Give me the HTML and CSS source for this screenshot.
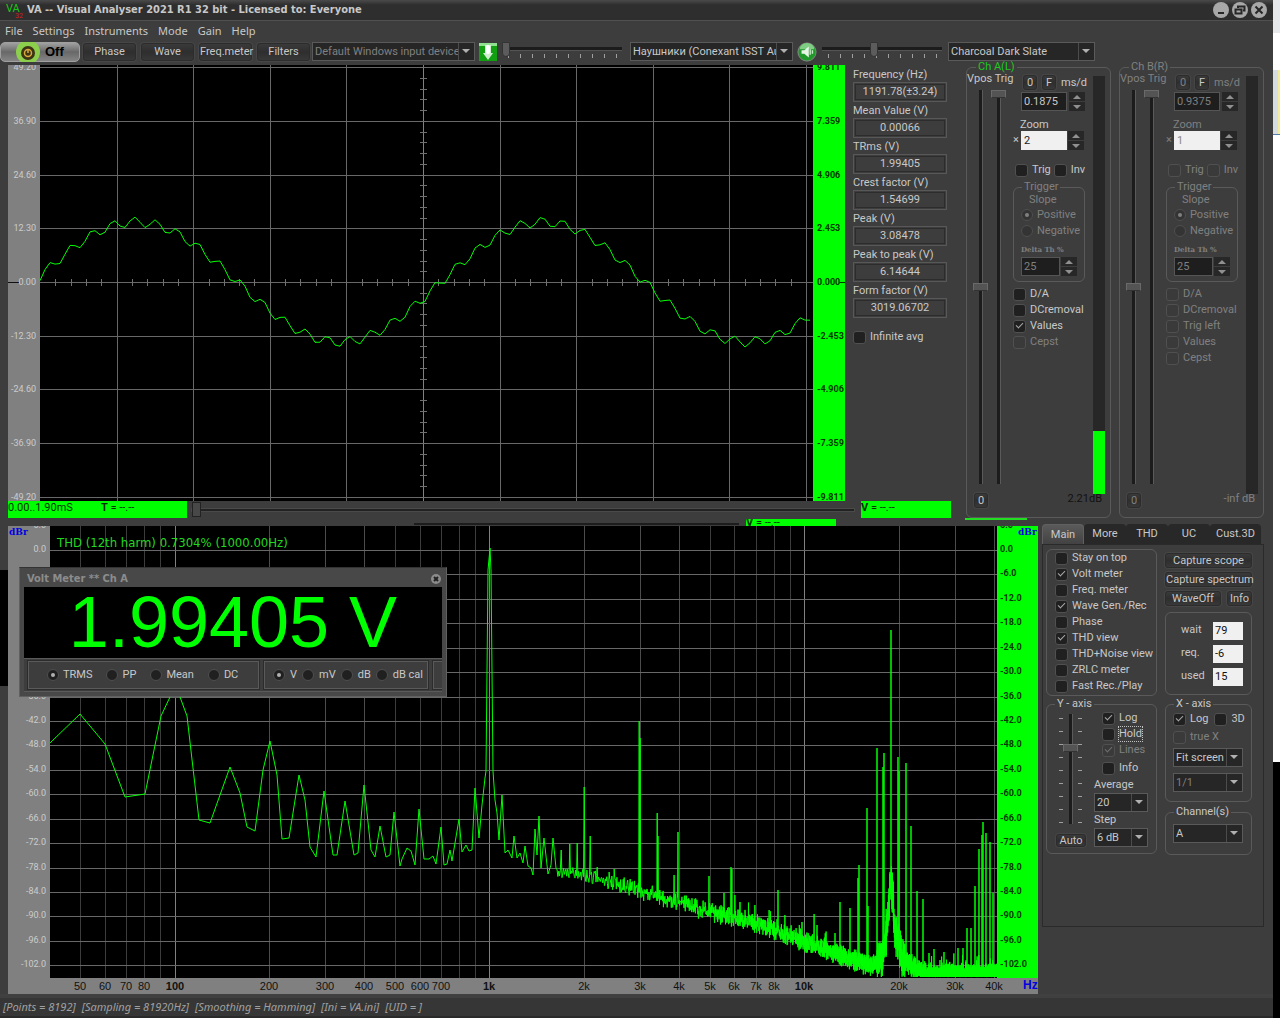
FILE: index.html
```html
<!DOCTYPE html>
<html lang="en">
<head>
<meta charset="utf-8">
<meta name="viewport" content="width=device-width, initial-scale=1">
<title>VA -- Visual Analyser 2021 R1 32 bit</title>
<link rel="stylesheet" href="styles.css">
</head>
<body>
<div class="app">
  <header class="titlebar">
    <svg class="logo" viewBox="0 0 18 18" width="18" height="18" aria-hidden="true">
      <text class="logo-main" x="1" y="11">VA</text><text class="logo-sub" x="10" y="17">32</text>
    </svg>
    <h1 class="title">VA -- Visual Analyser 2021 R1 32 bit - Licensed to: Everyone</h1>
    <div class="winbtns">
      <button class="winbtn" aria-label="Minimize"><svg viewBox="0 0 16 16"><path d="M5 11h6"/></svg></button>
      <button class="winbtn" aria-label="Restore"><svg viewBox="0 0 16 16"><path d="M6 6V4.5h6.500v4H11M3.500 7.500h6v4h-6z"/></svg></button>
      <button class="winbtn" aria-label="Close"><svg viewBox="0 0 16 16"><path d="M4.500 4.500l7 7M11.500 4.500l-7 7"/></svg></button>
    </div>
  </header>

  <nav class="menu">
    <a href="#file">File</a><a href="#settings">Settings</a><a href="#instruments">Instruments</a><a href="#mode">Mode</a><a href="#gain">Gain</a><a href="#help">Help</a>
  </nav>

  <div class="toolbar">
    <button class="power">
      <svg viewBox="0 0 24 20" width="24" height="20" aria-hidden="true"><circle cx="12" cy="10" r="12" fill="#8ccf4d"/><circle cx="12" cy="11" r="7" fill="#3c3414"/><circle cx="12" cy="11" r="3.500" fill="none" stroke="#d8a83c" stroke-width="1.500"/><path d="M12 7v4" stroke="#d8a83c" stroke-width="1.500"/></svg>
      <span>Off</span>
    </button>
    <button class="btn tool">Phase</button>
    <button class="btn tool">Wave</button>
    <button class="btn tool">Freq.meter</button>
    <button class="btn tool">Filters</button>
    <span class="combo in-device dim"><select aria-label="Input device"><option>Default Windows input device</option></select></span>
    <svg class="mic" viewBox="0 0 18 18" width="18" height="18" role="img" aria-label="Microphone"><rect width="18" height="18" fill="#12a012"/><path d="M0 0h18v3H0z" fill="#8fe08f"/><path d="M6 2h6v8h2l-5 7-5-7h2z" fill="#cfeecf"/><rect x="7" y="2" width="4" height="9" rx="2" fill="#fff"/></svg>
    <span class="hslider"><input type="range" min="0" max="100" value="0" aria-label="Input level"></span>
    <span class="combo out-device"><select aria-label="Output device"><option>Наушники (Conexant ISST Audio)</option></select></span>
    <svg class="speaker" viewBox="0 0 22 22" width="22" height="20" role="img" aria-label="Speaker"><circle cx="11" cy="11" r="10" fill="#1f9a2a" stroke="#8a8a8a"/><path d="M3 8a8 7 0 0 1 16 0z" fill="#7fce84"/><path d="M5 9h3l5-4v12l-5-4H5z" fill="#e6f5e6"/><path d="M14.500 8v6M17 9v4" stroke="#c8ecc8" stroke-width="1.500"/></svg>
    <span class="hslider"><input type="range" min="0" max="100" value="43" aria-label="Output level"></span>
    <span class="combo theme"><select aria-label="Theme"><option>Charcoal Dark Slate</option></select></span>
  </div>

  <main>
    <div class="upper">
      <div class="scope-area">
        <div class="scope-row">
          <svg id="scope" class="scope" role="img" aria-label="Oscilloscope"></svg>
          <div class="values">
            <label for="v1">Frequency (Hz)</label><output id="v1">1191.78(±3.24)</output>
            <label for="v2">Mean Value (V)</label><output id="v2">0.00066</output>
            <label for="v3">TRms (V)</label><output id="v3">1.99405</output>
            <label for="v4">Crest factor (V)</label><output id="v4">1.54699</output>
            <label for="v5">Peak (V)</label><output id="v5">3.08478</output>
            <label for="v6">Peak to peak (V)</label><output id="v6">6.14644</output>
            <label for="v7">Form factor (V)</label><output id="v7">3019.06702</output>
            <label class="check avg"><input type="checkbox">Infinite avg</label>
          </div>
        </div>
        <div class="readouts">
          <div class="green time"><span>0.00..1.90mS</span><span><b>T</b> = --.--</span></div>
          <span class="scroll"><input type="range" min="0" max="100" value="0" aria-label="Time position"></span>
          <div class="green volt"><b>V</b> = --.--</div>
        </div>
      </div>

      <fieldset class="channel">
        <legend>Ch A(L)</legend>
        <div class="sliders">
          <div class="heads">Vpos Trig</div>
          <div class="pair">
            <input class="vslider" type="range" min="0" max="100" value="50" aria-label="A Vpos">
            <input class="vslider" type="range" min="0" max="100" value="100" aria-label="A Trig">
          </div>
          <button class="btn zero">0</button>
        </div>
        <div class="controls">
          <div class="timebase"><button class="btn">0</button><button class="btn">F</button><span>ms/d</span></div>
          <div class="spin"><input type="text" value="0.1875" aria-label="A ms/d"><span class="arrows"><button aria-label="Up"></button><button aria-label="Down"></button></span></div>
          <label class="zoomlabel" for="zoomA">Zoom</label>
          <div class="spin light"><span class="times">×</span><input id="zoomA" type="text" value="2"><span class="arrows"><button aria-label="Up"></button><button aria-label="Down"></button></span></div>
          <div class="duo"><label class="check"><input type="checkbox">Trig</label><label class="check"><input type="checkbox">Inv</label></div>
          <fieldset class="trigger dim">
            <legend>Trigger</legend>
            <span class="slope">Slope</span>
            <label class="radio"><input type="radio" name="slopeA" checked>Positive</label>
            <label class="radio"><input type="radio" name="slopeA">Negative</label>
            <label class="delta" for="thA">Delta Th %</label>
            <div class="spin small"><input id="thA" type="text" value="25"><span class="arrows"><button aria-label="Up"></button><button aria-label="Down"></button></span></div>
          </fieldset>
          <div class="checks">
            <label class="check"><input type="checkbox">D/A</label>
            <label class="check"><input type="checkbox">DCremoval</label>
            <label class="check"><input type="checkbox" checked>Values</label>
            <label class="check dim"><input type="checkbox">Cepst</label>
          </div>
          <span class="level">2.21dB</span>
        </div>
        <div class="meter"><div class="fill" style="height:15%"></div></div>
      </fieldset>

      <fieldset class="channel off dim">
        <legend>Ch B(R)</legend>
        <div class="sliders">
          <div class="heads">Vpos Trig</div>
          <div class="pair">
            <input class="vslider" type="range" min="0" max="100" value="50" aria-label="B Vpos">
            <input class="vslider" type="range" min="0" max="100" value="100" aria-label="B Trig">
          </div>
          <button class="btn zero">0</button>
        </div>
        <div class="controls">
          <div class="timebase"><button class="btn">0</button><button class="btn lit">F</button><span>ms/d</span></div>
          <div class="spin"><input type="text" value="0.9375" aria-label="B ms/d"><span class="arrows"><button aria-label="Up"></button><button aria-label="Down"></button></span></div>
          <label class="zoomlabel" for="zoomB">Zoom</label>
          <div class="spin light"><span class="times">×</span><input id="zoomB" type="text" value="1"><span class="arrows"><button aria-label="Up"></button><button aria-label="Down"></button></span></div>
          <div class="duo"><label class="check"><input type="checkbox">Trig</label><label class="check"><input type="checkbox">Inv</label></div>
          <fieldset class="trigger">
            <legend>Trigger</legend>
            <span class="slope">Slope</span>
            <label class="radio"><input type="radio" name="slopeB" checked>Positive</label>
            <label class="radio"><input type="radio" name="slopeB">Negative</label>
            <label class="delta" for="thB">Delta Th %</label>
            <div class="spin small"><input id="thB" type="text" value="25"><span class="arrows"><button aria-label="Up"></button><button aria-label="Down"></button></span></div>
          </fieldset>
          <div class="checks">
            <label class="check"><input type="checkbox">D/A</label>
            <label class="check"><input type="checkbox">DCremoval</label>
            <label class="check"><input type="checkbox">Trig left</label>
            <label class="check"><input type="checkbox">Values</label>
            <label class="check"><input type="checkbox">Cepst</label>
          </div>
          <span class="level">-inf dB</span>
        </div>
        <div class="meter"></div>
      </fieldset>
    </div>

    <div class="seam"><span class="seam-track"></span><span class="seam-volt"><b>V</b> = --.--</span><span class="seam-line"></span></div>

    <div class="lower">
      <div class="spectrum-wrap">
        <svg id="spectrum" class="spectrum" role="img" aria-label="Spectrum"></svg>
        <section class="voltmeter">
          <header class="vm-title"><span>Volt Meter ** Ch A</span><button class="vm-close" aria-label="Close"><svg viewBox="0 0 10 10"><path d="M3 3l4 4M7 3l-4 4"/></svg></button></header>
          <div class="vm-display">1.99405 V</div>
          <div class="vm-modes">
            <div class="vm-group first">
              <label class="radio"><input type="radio" name="mode" checked>TRMS</label>
              <label class="radio"><input type="radio" name="mode">PP</label>
              <label class="radio"><input type="radio" name="mode">Mean</label>
              <label class="radio"><input type="radio" name="mode">DC</label>
            </div>
            <div class="vm-group units">
              <label class="radio"><input type="radio" name="unit" checked>V</label>
              <label class="radio"><input type="radio" name="unit">mV</label>
              <label class="radio"><input type="radio" name="unit">dB</label>
              <label class="radio"><input type="radio" name="unit">dB cal</label>
            </div>
            <div class="vm-group cut"></div>
          </div>
        </section>
      </div>

      <section class="side">
        <div class="tabs" role="tablist">
          <button class="tab active" role="tab">Main</button><button class="tab" role="tab">More</button><button class="tab" role="tab">THD</button><button class="tab" role="tab">UC</button><button class="tab" role="tab">Cust.3D</button>
        </div>
        <div class="panel">
          <div class="col">
            <div class="box views">
              <label class="check"><input type="checkbox">Stay on top</label>
              <label class="check"><input type="checkbox" checked>Volt meter</label>
              <label class="check"><input type="checkbox">Freq. meter</label>
              <label class="check"><input type="checkbox" checked>Wave Gen./Rec</label>
              <label class="check"><input type="checkbox">Phase</label>
              <label class="check"><input type="checkbox" checked>THD view</label>
              <label class="check"><input type="checkbox">THD+Noise view</label>
              <label class="check"><input type="checkbox">ZRLC meter</label>
              <label class="check"><input type="checkbox">Fast Rec./Play</label>
            </div>
            <fieldset class="box yaxis">
              <legend>Y - axis</legend>
              <div class="yleft">
                <span class="ticks"><input class="vslider" type="range" min="0" max="100" value="71" aria-label="Y position"></span>
                <button class="btn auto">Auto</button>
              </div>
              <div class="yright">
                <label class="check"><input type="checkbox" checked>Log</label>
                <label class="check focus"><input type="checkbox"><span>Hold</span></label>
                <label class="check dim"><input type="checkbox" checked>Lines</label>
                <label class="check"><input type="checkbox">Info</label>
                <label class="cap" for="average">Average</label>
                <span class="combo"><select id="average"><option>20</option></select></span>
                <label class="cap" for="step">Step</label>
                <span class="combo"><select id="step"><option>6 dB</option></select></span>
              </div>
            </fieldset>
          </div>
          <div class="col right">
            <div class="actions">
              <button class="btn wide">Capture scope</button>
              <button class="btn wide">Capture spectrum</button>
              <button class="btn wave">WaveOff</button><button class="btn">Info</button>
            </div>
            <div class="box waits">
              <label for="wait">wait</label><input id="wait" type="text" value="79">
              <label for="req">req.</label><input id="req" type="text" value="-6">
              <label for="used">used</label><input id="used" type="text" value="15">
            </div>
            <fieldset class="box xaxis">
              <legend>X - axis</legend>
              <div class="duo"><label class="check"><input type="checkbox" checked>Log</label><label class="check"><input type="checkbox">3D</label></div>
              <label class="check dim"><input type="checkbox">true X</label>
              <span class="combo"><select aria-label="X fit"><option>Fit screen</option></select></span>
              <span class="combo dim"><select aria-label="X ratio"><option>1/1</option></select></span>
            </fieldset>
            <fieldset class="box channels">
              <legend>Channel(s)</legend>
              <span class="combo"><select aria-label="Channels"><option>A</option></select></span>
            </fieldset>
          </div>
        </div>
      </section>
    </div>
  </main>
  <footer class="status"><span>[Points = 8192]</span><span>[Sampling = 81920Hz]</span><span>[Smoothing = Hamming]</span><span>[Ini = VA.ini]</span><span>[UID = ]</span></footer>
</div>
<aside class="desktop" aria-hidden="true"></aside>
<script src="plots.js"></script>
</body>
</html>
```
FILE: styles.css
```css
* { box-sizing: border-box; }
body {
  margin: 0;
  min-height: 100vh;
  display: flex;
  background: #3d3d3d;
  color: #c8c8c8;
  font: 11px/16px Roboto, "Liberation Sans", sans-serif;
}
button, input, select { font: inherit; color: inherit; margin: 0; padding: 0; }
fieldset { margin: 0; padding: 0; border: 1px solid #5a5a5a; border-radius: 6px; min-width: 0; }
legend { padding: 0 2px; margin-left: 8px; line-height: 12px; }
.app { flex: 1; min-width: 0; display: flex; flex-direction: column; }
.dim { color: #808080; }

.desktop {
  width: 7px;
  background:
    linear-gradient(#f2ec9c, #f2ec9c) 5px 70px / 2px 64px no-repeat,
    linear-gradient(#e6e8ea 0 33px, #fff 33px 70px, #d6dde2 70px 134px, #5580a8 134px 135px, #fff 135px 762px, #000 762px);
}

/* window frame */
.titlebar { height: 21px; display: flex; align-items: center; padding: 0 6px 0 5px; background: linear-gradient(#4a4a4a, #2e2e2e 5px); border-bottom: 1px solid #505050; }
.logo-main { fill: #18c818; }
.logo-sub { fill: #d02020; }
.title { margin: 0 auto 0 4px; font: bold 11px/16px "DejaVu Sans Condensed", "Noto Sans", sans-serif; }
.winbtns { display: flex; gap: 3px; }
.winbtn { width: 16px; height: 16px; border: 0; border-radius: 8px; background: #a8a8a8; display: flex; }
.winbtn svg { width: 16px; height: 16px; fill: none; stroke: #262626; stroke-width: 2; }

.menu { height: 20px; display: flex; gap: 10px; padding: 0 5px; }
.menu a { color: #c8c8c8; text-decoration: none; font: 11px/20px "Noto Sans", sans-serif; }

.toolbar { display: flex; align-items: center; height: 21px; white-space: nowrap; }
.btn { border: 1px solid #2c2c2c; border-radius: 3px; background: linear-gradient(#3a3a3a, #2e2e2e 50%, #383838); box-shadow: 0 0 0 1px #464646; line-height: 13px; white-space: nowrap; cursor: pointer; }
.tool { width: 53px; height: 18px; margin-left: 3px; flex: none; line-height: 16px; }
.tool + .tool { margin-left: 5px; }
.power { width: 80px; height: 20px; flex: none; display: flex; align-items: center; gap: 5px; padding-left: 15px; border: 1px solid #a0a0a0; border-radius: 5px; background: linear-gradient(#a0a0a0, #686868 50%, #858585); color: #000; font: bold 13px/18px "Liberation Sans", sans-serif; }
.combo { position: relative; display: flex; height: 19px; border: 1px solid #5a5a5a; background: #262626; }
.combo select { appearance: none; flex: 1; min-width: 0; width: 100%; border: 0; background: none; padding: 0 15px 0 2px; line-height: 16px; overflow: hidden; }
.combo::before { content: ""; position: absolute; right: 0; top: 0; bottom: 0; width: 15px; border-left: 1px solid #4c4c4c; pointer-events: none; }
.combo::after { content: ""; position: absolute; right: 4px; top: 6px; border: 4px solid transparent; border-top-color: #b0b0b0; border-bottom: 0; pointer-events: none; }
.in-device { width: 163px; margin: 0 4px 0 2px; }
.out-device { width: 163px; margin: 0 3px 0 8px; }
.theme { width: 147px; margin-left: 6px; }
.hslider { width: 120px; height: 20px; margin-left: 5px; display: flex; background: repeating-linear-gradient(90deg, #a0a0a0 0 1px, transparent 1px 12px) 6px 12px / 110px 4px no-repeat; }
.speaker + .hslider { margin-left: 4px; }
.mic, .speaker { flex: none; }

.hslider input, .scroll input { appearance: none; width: 100%; height: 14px; background: none; }
.hslider input::-webkit-slider-runnable-track { height: 4px; background: #1c1c1c; border-bottom: 1px solid #555; }
.hslider input::-webkit-slider-thumb { appearance: none; width: 8px; height: 15px; margin-top: -5px; background: #5c5c5c; border: 1px solid #333; border-radius: 1px 1px 4px 4px; }

/* oscilloscope */
main { padding: 3px 9px 0 8px; }
.upper { display: flex; align-items: stretch; gap: 8px; }
.scope-area { flex: 1; min-width: 0; margin-right: 6px; }
.scope-row { display: flex; gap: 8px; height: 436px; }
.scope { flex: 1; min-width: 0; height: 436px; display: block; background: #000; }
.values { width: 94px; margin-right: 5px; display: flex; flex-direction: column; }
.values > label { line-height: 15px; margin-top: 1px; }
.values > label:first-child { margin-top: 2px; }
.values output { height: 20px; line-height: 17px; text-align: center; border: 1px solid #585858; outline: 1px solid #2c2c2c; outline-offset: -3px; }
.values .avg { margin-top: 11px; line-height: 16px; }
.readouts { display: flex; height: 17px; }
.green { background: #0f0; color: #003000; line-height: 14px; }
.time { width: 179px; display: flex; gap: 28px; }
.volt { width: 90px; margin: 0 1px 0 6px; }
.scroll { flex: 1; display: flex; padding: 2px 0 0 4px; }
.scroll input::-webkit-slider-runnable-track { height: 4px; background: #222; border: 1px solid #4a4a4a; }
.scroll input::-webkit-slider-thumb { appearance: none; width: 9px; height: 15px; margin-top: -7px; background: #484848; border: 1px solid #222; }

/* checkboxes and radios */
.check, .radio { display: flex; align-items: center; gap: 4px; line-height: 16px; white-space: nowrap; }
.check input { appearance: none; width: 13px; height: 13px; flex: none; border: 1px solid #505050; border-radius: 3px; background: #202020; display: grid; place-content: center; }
.check input:checked::after { content: ""; width: 6px; height: 3px; border: solid #a8a8a8; border-width: 0 0 1px 1px; transform: rotate(-45deg) translate(1px, -1px); }
.dim.check input, .dim .check input { background: #3a3a3a; }
.dim.check input:checked::after { border-color: #707070; }
.radio input { appearance: none; width: 12px; height: 12px; flex: none; border: 1px solid #4e4e4e; border-radius: 6px; background: #202020; display: grid; place-content: center; }
.radio input:checked::after { content: ""; width: 4px; height: 4px; border-radius: 2px; background: #b0b0b0; }
.dim .radio input { background: #343434; }
.dim .radio input:checked::after { background: #808080; }

/* channel strips */
.channel { position: relative; width: 145px; margin-top: -4px; }
.channel > legend { color: #20c820; margin-left: 9px; }
.channel.off > legend { color: #808080; }
.sliders { float: left; width: 45px; }
.heads { height: 17px; line-height: 12px; white-space: nowrap; }
.pair { display: flex; gap: 3px; padding-left: 6px; }
.vslider { appearance: none; writing-mode: vertical-lr; direction: rtl; width: 15px; height: 394px; background: none; }
.vslider::-webkit-slider-runnable-track { width: 4px; background: #1c1c1c; border-right: 1px solid #5a5a5a; }
.vslider::-webkit-slider-thumb { appearance: none; width: 15px; height: 8px; margin-left: -6px; background: #545454; border: 1px solid #6a6a6a; border-bottom-color: #333; }
.zero { display: block; width: 14px; height: 15px; margin: 9px 0 9px 7px; }
.controls { float: left; width: 81px; padding: 2px 0 0 1px; }
.timebase { display: flex; gap: 5px; padding-left: 10px; line-height: 15px; }
.timebase .btn { width: 14px; height: 15px; }
.lit { color: #c8c8c8; }
.spin { display: flex; gap: 2px; padding-left: 8px; margin-top: 2px; }
.spin input { width: 46px; height: 19px; padding: 0 2px; border: 1px solid #555; background: #1e1e1e; line-height: 16px; }
.spin.light { padding-left: 0; gap: 1px; margin-top: 0; }
.spin.light input { background: #f0f0f0; color: #222; border-color: #f0f0f0; }
.off .spin.light input { color: #888; }
.times { width: 7px; line-height: 17px; }
.zoomlabel { display: block; margin: 7px 0 0 7px; line-height: 13px; }
.arrows { display: flex; flex-direction: column; gap: 1px; }
.arrows button { width: 16px; height: 9px; border: 0; background: #272727; display: grid; place-content: center; }
.arrows button::after { content: ""; border: 4px solid transparent; border-top: 0; border-bottom-color: #909090; }
.arrows button:last-child::after { border: 4px solid transparent; border-bottom: 0; border-top-color: #909090; }
.duo { display: flex; gap: 5px; }
.controls .duo { margin: 12px 0 0 2px; gap: 3px; }
.trigger { width: 72px; margin: 3px 0 0; padding-left: 7px; height: 101px; }
.trigger legend { margin-left: 1px; }
.slope { display: block; padding-left: 8px; line-height: 14px; }
.delta { display: block; font: bold 7px/10px "DejaVu Serif", serif; margin-top: 6px; }
.small { padding-left: 0; gap: 1px; }
.small input { width: 39px; }
.checks { margin: 4px 0 0; }
.level { position: absolute; right: 8px; bottom: 11px; line-height: 14px; }
.channel:not(.off) .level { color: #111; }
.meter { float: left; width: 12px; height: 418px; margin-top: 3px; background: #272727; display: flex; flex-direction: column; justify-content: flex-end; }
.fill { background: #0f0; }

/* leftovers of the readout row between the two graphs */
.seam { height: 8px; display: flex; align-items: flex-end; overflow: hidden; }
.seam-track { width: 325px; margin-left: 406px; height: 3px; border-top: 2px solid #1c1c1c; }
.seam-volt { width: 90px; height: 7px; margin-left: 7px; background: #0f0; color: #003000; line-height: 8px; overflow: hidden; }
.seam-line { align-self: flex-start; width: 62px; height: 2px; margin-left: 129px; background: #22dd22; }

/* spectrum */
.lower { display: flex; gap: 4px; }
.spectrum-wrap { position: relative; flex: 1; min-width: 0; }
.spectrum-wrap::before { content: ""; position: absolute; left: -8px; top: 44px; width: 8px; height: 116px; background: #000; }
.spectrum { display: block; width: 100%; height: 468px; background: #808080; }
svg text { font: 9px Roboto, "Liberation Sans", sans-serif; }
svg .t-left { fill: #cccccc; text-anchor: end; }
svg .t-right { fill: #003800; font-weight: bold; }
svg .t-x { fill: #111; font: 11px "Liberation Sans", sans-serif; text-anchor: middle; }
svg .t-major { font-weight: bold; }
svg .t-unit { fill: #0000e0; font: bold 9px "DejaVu Serif", serif; }
svg .t-hz { fill: #0000e0; font: bold 12px "Liberation Sans", sans-serif; }
svg .t-thd { fill: #20d820; font: 13px "DejaVu Sans Condensed", sans-serif; }
svg .logo-main { font-size: 11px; }
svg .logo-sub { font-size: 7px; }
.trace { fill: none; stroke: #0f0; stroke-width: 1; }

.voltmeter { position: absolute; left: 11px; top: 41px; width: 428px; height: 130px; padding: 2px 4px 4px; background: #484848; border: 1px solid #606060; border-top-color: #333; }
.vm-title { height: 17px; display: flex; justify-content: space-between; align-items: center; padding: 0 1px 0 3px; color: #8c8c8c; font: bold 11px/16px "DejaVu Sans Condensed", sans-serif; }
.vm-close { width: 10px; height: 10px; border: 0; border-radius: 5px; background: #8c8c8c; display: flex; }
.vm-close svg { width: 10px; height: 10px; stroke: #222; stroke-width: 2; }
.vm-display { height: 71px; background: #000; color: #0f0; text-align: center; font: 72px/71px "Liberation Sans", sans-serif; white-space: nowrap; }
.vm-modes { display: flex; gap: 5px; padding: 2px 0 0 4px; overflow: hidden; background: #3d3d3d; height: 34px; border-top: 1px solid #5a5a5a; border-bottom: 1px solid #5a5a5a; }
.vm-group { flex: none; display: flex; align-items: center; height: 28px; border: 1px solid #5a5a5a; outline: 1px solid #2c2c2c; }
.first { width: 231px; padding-left: 18px; gap: 14px; }
.units { width: 164px; padding-left: 8px; gap: 5px; }
.units .radio { gap: 5px; }
.cut { width: 20px; }

/* side panel */
.side { width: 222px; margin-top: -2px; height: 403px; display: flex; flex-direction: column; }
.tabs { display: flex; height: 20px; }
.tab { border: 0; border-radius: 4px 4px 0 0; background: #282828; width: 42px; line-height: 18px; }
.tab:last-child { width: 51px; }
.tab.active { background: linear-gradient(#5a5a5a, #424242); border: 1px solid #606060; border-bottom: 0; }
.panel { flex: 1; border: 1px solid #2a2a2a; padding: 4px 3px; display: flex; gap: 8px; }
.col { width: 111px; display: flex; flex-direction: column; }
.right { width: 87px; }
.box { border: 1px solid #5a5a5a; border-radius: 6px; }
.views { height: 147px; padding: 0 5px 0 8px; overflow: hidden; }
.yaxis { margin-top: 2px; height: 156px; }
.yleft { float: left; width: 45px; padding: 4px 0 0 9px; }
.ticks { display: flex; justify-content: center; width: 30px; height: 110px; background: repeating-linear-gradient(#a0a0a0 0 1px, transparent 1px 13px) 3px 4px / 4px 105px no-repeat, repeating-linear-gradient(#a0a0a0 0 1px, transparent 1px 13px) 22px 4px / 4px 105px no-repeat; }
.ticks .vslider { height: 110px; }
.auto { width: 30px; height: 13px; margin-top: 10px; line-height: 11px; }
.yright { float: left; width: 58px; padding-left: 2px; margin-top: -1px; }
.yright .check { line-height: 18px; margin-left: 8px; }
.focus span { outline: 1px dotted #c0c0c0; line-height: 14px; }
.cap { display: block; line-height: 14px; margin-top: 1px; }
.yright .combo { width: 54px; margin: 1px 0; }
.actions { display: flex; flex-wrap: wrap; gap: 4px; padding-top: 4px; justify-content: space-between; }
.actions .btn { height: 15px; }
.actions .btn:last-child { width: 25px; }
.wide { width: 87px; }
.wave { width: 56px; }
.waits { margin-top: 6px; height: 83px; display: grid; grid-template-columns: 32px 30px; gap: 5px 0; align-content: center; padding-left: 15px; }
.waits input { height: 18px; border: 0; background: #f0f0f0; color: #111; padding-left: 2px; }
.xaxis { margin-top: 3px; height: 104px; padding: 0 7px; }
.xaxis legend, .channels legend { margin-left: 1px; }
.xaxis .check { line-height: 18px; gap: 4px; }
.xaxis .combo { margin: 2px 0 6px; width: 70px; }
.xaxis .duo { gap: 6px; }
.channels { margin-top: 4px; height: 49px; padding: 6px 7px; }
.channels .combo { width: 70px; }

.status { height: 24px; padding: 3px 3px; display: flex; gap: 6px; background: #363636; border-top: 4px solid #404040; border-bottom: 2px solid #2a2a2a; font: italic 11px/12px "Noto Sans", sans-serif; color: #a0a0a0; }
```
FILE: plots.js
```js
const NS = "http://www.w3.org/2000/svg";

function add(svg, name, attrs, text) {
  const el = document.createElementNS(NS, name);
  for (const key in attrs) el.setAttribute(key, attrs[key]);
  if (text !== undefined) el.textContent = text;
  svg.appendChild(el);
}
function rect(svg, x, y, width, height, fill) {
  add(svg, "rect", { x: Math.round(x), y: Math.round(y), width, height, fill });
}
function label(svg, x, y, cls, text) {
  add(svg, "text", { x, y, class: cls }, text);
}

/* deterministic noise, 0..1 */
let seed = 12345;
function rnd() {
  seed = (seed * 1103515245 + 12345) % 2147483648;
  return seed / 2147483648;
}

function drawScope() {
  const svg = document.getElementById("scope");
  const W = svg.clientWidth, H = svg.clientHeight;
  const left = 32, right = W - 32, mid = 217, row = 53.7;
  const colW = (right - left - 7) / 10;
  for (let i = 1; i <= 10; i++) {
    rect(svg, left + i * colW, 0, 1, H, i === 5 ? "#808080" : "#686868");
  }
  for (let i = -4; i <= 4; i++) rect(svg, left, mid + i * row, right - left, 1, "#686868");
  for (let i = 1; i < 50; i++) rect(svg, left + i * colW / 5, mid - 3, 1, 7, "#707070");
  for (let i = -20; i <= 20; i++) rect(svg, left + 5 * colW - 3, mid + i * row / 5, 7, 1, "#707070");
  rect(svg, 0, 0, left, H, "#808080");
  rect(svg, right, 0, 32, H, "#00ff00");
  rect(svg, 0, mid, 11, 1, "#111");
  rect(svg, W - 6, mid, 6, 1, "#003800");
  const a = ["49.20", "36.90", "24.60", "12.30", "0.00", "-12.30", "-24.60", "-36.90", "-49.20"];
  const b = ["9.811", "7.359", "4.906", "2.453", "0.000", "-2.453", "-4.906", "-7.359", "-9.811"];
  for (let i = 0; i < 9; i++) {
    const y = Math.round(mid + (i - 4) * row + 3);
    label(svg, 28, y, "t-left", a[i]);
    label(svg, right + 4, y, "t-right", b[i]);
  }
  const k = (right - left) / 773;
  const pts = [];
  for (let x = 0; x <= 771; x += 5) {
    const main = 60 * Math.sin(2 * Math.PI * (x + 6) / 407);
    const ripple = 5 * Math.cos(2 * Math.PI * (x - 94.5) / 21.43);
    pts.push((left + x * k).toFixed(1) + "," + (mid - main - ripple).toFixed(1));
  }
  add(svg, "polyline", { class: "trace", points: pts.join(" ") });
}

/* measured curve below 1.6 kHz, in plot units of 947 x 452 */
const LOW = [[0,217],[30,188],[55,218],[75,271],[95,268],[111,190],[120,171],[125,160],[130,171],[137,190],[149,294],[160,297],[180,241],[190,267],[197,301],[205,305],[213,244],[220,215],[227,249],[232,313],[239,312],[249,249],[255,274],[260,321],[266,331],[274,265],[283,329],[287,329],[295,275],[304,329],[308,327],[314,259],[321,324],[325,331],[330,300],[336,331],[340,329],[344,286],[350,340],[352,333],[357,322],[361,325],[365,339],[369,283],[374,333],[379,333],[383,330],[386,338],[391,301],[394,339],[397,338],[400,324],[402,335],[409,293],[412,326],[416,319],[419,325],[422,324],[425,262],[429,312],[432,279],[435,252],[436,245],[437,145],[438,44],[440,22],[441,44],[442,145],[443,245],[445,274],[447,287],[449,314],[452,269],[455,327],[458,324],[462,332],[464,310],[467,332],[470,327],[473,337],[475,320],[478,340],[481,342],[483,349],[485,303],[487,329],[489,290],[491,342],[494,312],[498,348],[501,339],[503,312],[506,342]];
const SPIKES = [[511,324],[520,318],[527,317],[534,261],[540,310],[547,341],[559,346],[564,343],[589,195],[590,212],[607,287],[608,310],[624,349],[628,306],[659,350],[674,367],[681,341],[682,343],[685,369],[690,376],[705,379],[719,384],[728,364],[735,389],[752,396],[764,388],[767,399],[785,407],[790,376],[800,382],[808,352],[809,339],[817,282],[818,380],[827,222],[834,227],[833,241],[841,104],[848,231],[849,245],[856,237],[861,300],[867,365],[873,373],[879,427],[884,423],[890,434],[894,426],[908,422],[913,422],[917,402],[921,402],[925,360],[929,323],[932,309],[933,296],[936,307],[940,316],[943,367]];
const BASE = [[506,344],[550,353],[590,365],[650,383],[710,399],[754,415],[800,433],[822,440],[832,432],[837,405],[841,350],[845,405],[852,432],[862,441],[875,448],[947,449]];

function baseline(x) {
  for (let i = 1; i < BASE.length; i++) {
    if (x <= BASE[i][0]) {
      const [x0, y0] = BASE[i - 1], [x1, y1] = BASE[i];
      return y0 + (y1 - y0) * (x - x0) / (x1 - x0);
    }
  }
  return 449;
}

function drawSpectrum() {
  const svg = document.getElementById("spectrum");
  const W = svg.clientWidth;
  const left = 42, right = W - 41, k = (right - left) / 947, bottom = 452;
  const fx = f => 124.5 + 314.9 * Math.log10(f / 100);
  rect(svg, left, 0, right - left, bottom, "#000");
  for (const d of [10, 100, 1000, 10000]) {
    for (let n = 1; n < 10; n++) {
      const x = fx(d * n);
      if (x > 0 && x < 947) rect(svg, left + x * k, 0, 1, bottom, n === 1 ? "#808080" : n < 5 ? "#4c4c4c" : "#3c3c3c");
    }
  }
  for (let i = 0; i <= 17; i++) {
    rect(svg, left, 24 + i * 24.43, right - left, 1, "#686868");
  }
  const pts = LOW.slice();
  const bins = {};
  for (const [x, y] of SPIKES) bins[Math.round(10 * Math.pow(10, (x - 124.5) / 314.9))] = y;
  for (let bin = 164; bin < 4080; bin++) {
    const x = fx(bin * 10), b = baseline(x);
    if (x > 947) break;
    const near = Math.abs(x - 841);
    const spread = near < 14 ? 24 : 9 + Math.min(3, (x - 506) / 80);
    let y = b + (rnd() + rnd() - 1) * spread;
    if (rnd() < 0.04) y -= rnd() * 14;
    if (bins[bin]) y = bins[bin];
    pts.push([x, Math.min(y, 451)]);
  }
  rect(svg, right, 0, 41, bottom, "#00ff00");
  add(svg, "polyline", { class: "trace", points: pts.map(p => (left + p[0] * k).toFixed(1) + "," + p[1].toFixed(1)).join(" ") });
  for (let i = -1; i <= 17; i++) {
    const y = Math.round(26 + i * 24.43), text = (-6 * i || 0).toFixed(1);
    label(svg, 38, y, "t-left", text);
    label(svg, right + 3, y, "t-right", text);
  }
  label(svg, 1, 9, "t-unit", "dBr");
  label(svg, W - 20, 9, "t-unit", "dBr");
  label(svg, 49, 21, "t-thd", "THD (12th harm) 0.7304% (1000.00Hz)");
  const marks = [[50,"50"],[60,"60"],[70,"70"],[80,"80"],[100,"100"],[200,"200"],[300,"300"],[400,"400"],[500,"500"],[600,"600"],[700,"700"],[1000,"1k"],[2000,"2k"],[3000,"3k"],[4000,"4k"],[5000,"5k"],[6000,"6k"],[7000,"7k"],[8000,"8k"],[10000,"10k"],[20000,"20k"],[30000,"30k"],[40000,"40k"]];
  for (const [f, t] of marks) {
    const major = f === 100 || f === 1000 || f === 10000;
    label(svg, Math.round(left + fx(f) * k), 464, "t-x" + (major ? " t-major" : ""), t);
  }
  label(svg, W - 15, 463, "t-hz", "Hz");
}

drawScope();
drawSpectrum();
```
